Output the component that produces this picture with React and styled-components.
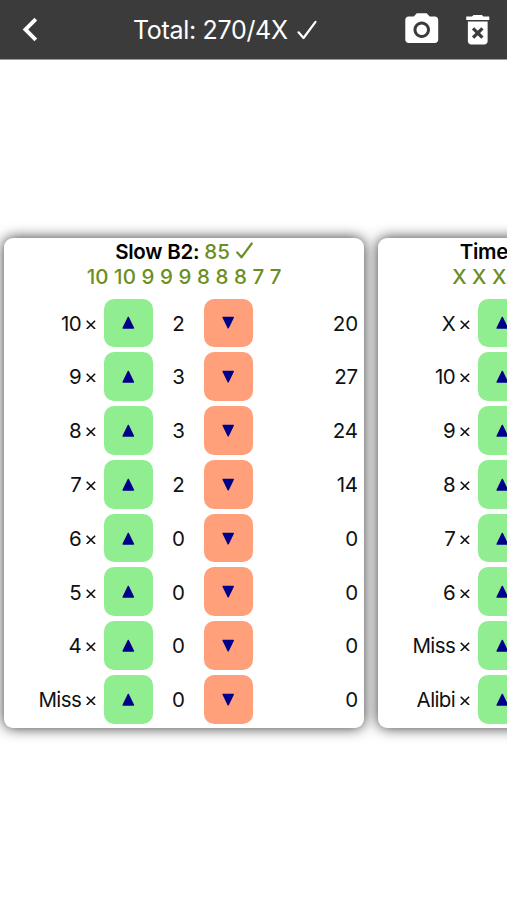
import styled, { createGlobalStyle } from "styled-components";
import { MdChevronLeft, MdDeleteForever, MdPhotoCamera } from "react-icons/md";

const GlobalStyle = createGlobalStyle`
  body {
    margin: 0;
    background: #fff;
    color: #111;
    font-family: Inter, "Liberation Sans", sans-serif;
    overflow: hidden;
  }
`;

const Screen = styled.div`
  height: 900px;
  overflow: hidden;
`;

const Header = styled.header`
  display: flex;
  align-items: center;
  box-sizing: border-box;
  height: 59px;
  padding: 0 10px 0 6.5px;
  background: #3b3b3b;
  box-shadow: 0 1px 0 #999;
  color: #fff;
`;

const IconButton = styled.button`
  display: flex;
  flex: none;
  padding: 0;
  border: 0;
  background: none;
  color: inherit;
`;

const HeaderActions = styled.div`
  display: flex;
  gap: 16px;
`;

const Title = styled.h1`
  flex: 1;
  display: flex;
  align-items: center;
  gap: 2.5px;
  margin: 0;
  padding-left: 79.5px;
  font-size: 25px;
  font-weight: 400;
  letter-spacing: -0.32px;
  white-space: pre;
`;

const Stages = styled.main`
  display: flex;
  gap: 14.5px;
  padding: 178.5px 0 0 4.4px;
`;

const Card = styled.section`
  flex: none;
  box-sizing: border-box;
  width: 359.5px;
  height: 490px;
  padding-top: 2px;
  border-radius: 9px;
  background: #fff;
  box-shadow: 0 0 14px rgba(0, 0, 0, 0.8);
`;

const CardTitle = styled.h2`
  display: flex;
  justify-content: center;
  align-items: center;
  height: 24.5px;
  margin: 0;
  color: #000;
  font-size: 20.5px;
  font-weight: 600;
  letter-spacing: -0.25px;
  white-space: pre;
`;

const Points = styled.span`
  color: #6b8e23;
  font-weight: 500;
  letter-spacing: 0.3px;
`;

const Shots = styled.div`
  height: 24.5px;
  color: #6b8e23;
  font-size: 20.5px;
  font-weight: 500;
  line-height: 25px;
  letter-spacing: 0.06px;
  text-align: center;
`;

const Rows = styled.div`
  display: grid;
  gap: 5px;
  padding-top: 10px;
`;

const Row = styled.div`
  display: grid;
  grid-template-columns: 91.8px 64px 36.5px 64px 1fr;
  align-items: center;
  height: 48.8px;
  padding-right: 6px;
  font-size: 20.5px;
  letter-spacing: -0.2px;
  line-height: 26px;
`;

const Label = styled.span`
  display: flex;
  justify-content: flex-end;
  align-items: center;
  gap: 5px;
  padding-top: 1.3px;
  letter-spacing: -0.6px;
`;

const Count = styled.span`
  padding-top: 1.3px;
  text-align: center;
`;

const Sum = styled.span`
  padding-top: 1.3px;
  text-align: right;
`;

const StepButton = styled.button`
  display: flex;
  justify-content: center;
  align-items: center;
  justify-self: center;
  width: 49px;
  height: 48.8px;
  padding: 0;
  border: 0;
  border-radius: 10px;
  background: ${({ $down }) => ($down ? "lightsalmon" : "lightgreen")};
`;

const CheckIcon = styled.svg`
  flex: none;
  fill: none;
  stroke: currentColor;
  stroke-linecap: round;
  stroke-linejoin: round;
`;

const stages = [
  {
    name: "Slow B2:",
    points: "85",
    shots: "10 10 9 9 9 8 8 8 7 7",
    rows: [
      ["10", 2, 20],
      ["9", 3, 27],
      ["8", 3, 24],
      ["7", 2, 14],
      ["6", 0, 0],
      ["5", 0, 0],
      ["4", 0, 0],
      ["Miss", 0, 0],
    ],
  },
  {
    name: "Timed B2:",
    points: "185/4X",
    shots: "X X X X 10 10 10 9 9 8",
    rows: [
      ["X", 4, 40],
      ["10", 3, 30],
      ["9", 2, 18],
      ["8", 1, 8],
      ["7", 0, 0],
      ["6", 0, 0],
      ["Miss", 0, 0],
      ["Alibi", 0, 0],
    ],
  },
];

function Check({ size, weight }) {
  return (
    <CheckIcon width={size} height={size} viewBox="0 0 20 20" strokeWidth={weight}>
      <path d="M1.5 12.3 6.5 18 18.5 1.8" />
    </CheckIcon>
  );
}

function Triangle({ down }) {
  return (
    <svg width="13" height="13" viewBox="0 0 13 13" fill="#00008b" stroke="#00008b" strokeWidth="1.3" strokeLinejoin="round">
      <path d={down ? "M1.1 1.4h10.2L6.2 11.9z" : "M1.1 12.1h10.4L6.3 1.4z"} />
    </svg>
  );
}

function Stage({ name, points, shots, rows }) {
  return (
    <Card>
      <CardTitle>
        {name} <Points>{points} </Points>
        <Points>
          <Check size={17} weight={2.6} />
        </Points>
      </CardTitle>
      <Shots>{shots}</Shots>
      <Rows>
        {rows.map(([label, count, sum]) => (
          <Row key={label}>
            <Label>
              {label}
              <svg width="10" height="10" viewBox="0 0 10 10" stroke="currentColor" strokeWidth="1.6">
                <path d="M.7 1.7 9.1 10M9.1 1.7.7 10" />
              </svg>
            </Label>
            <StepButton>
              <Triangle />
            </StepButton>
            <Count>{count}</Count>
            <StepButton $down>
              <Triangle down />
            </StepButton>
            <Sum>{sum}</Sum>
          </Row>
        ))}
      </Rows>
    </Card>
  );
}

export default function App() {
  return (
    <Screen>
      <GlobalStyle />
      <Header>
        <IconButton aria-label="Back">
          <MdChevronLeft size={47} />
        </IconButton>
        <Title>
          Total: 270/4X <Check size={20} weight={2.2} />
        </Title>
        <HeaderActions>
          <IconButton aria-label="Photo">
            <MdPhotoCamera size={39.5} />
          </IconButton>
          <IconButton aria-label="Delete">
            <MdDeleteForever size={39.5} />
          </IconButton>
        </HeaderActions>
      </Header>
      <Stages>
        {stages.map((stage) => (
          <Stage key={stage.name} {...stage} />
        ))}
      </Stages>
    </Screen>
  );
}
